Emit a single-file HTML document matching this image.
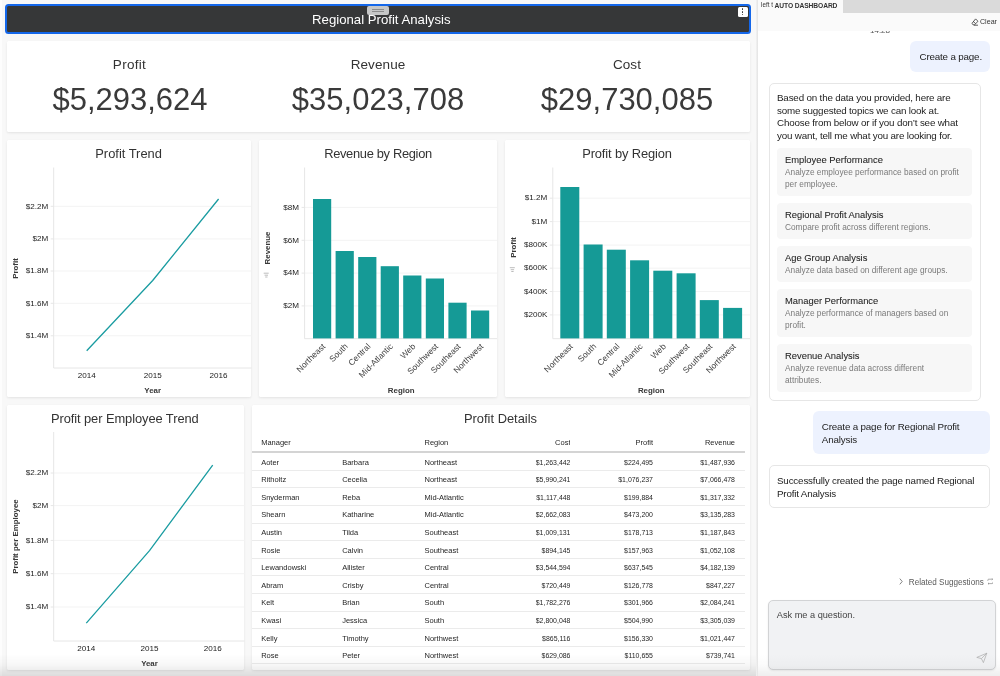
<!DOCTYPE html>
<html><head><meta charset="utf-8"><title>Regional Profit Analysis</title>
<style>
html,body{margin:0;padding:0;}
body{width:1000px;height:676px;overflow:hidden;background:#f8f8f8;font-family:"Liberation Sans",sans-serif;position:relative;color:#333;}
.abs{position:absolute;}
.panel{position:absolute;background:#fff;border-radius:1.5px;box-shadow:0 1px 2.5px rgba(0,0,0,.085),0 0 1.5px rgba(0,0,0,.035);}
.ttl{position:absolute;font-size:12.9px;color:#333;white-space:nowrap;transform:translate(-50%,-50%);}
.kl{position:absolute;font-size:13.5px;color:#333;white-space:nowrap;transform:translate(-50%,-50%);letter-spacing:.3px;}
.kv{position:absolute;font-size:31.7px;color:#3a3a3a;white-space:nowrap;transform:translate(-50%,-50%) scaleX(.978);}
svg text{font-family:"Liberation Sans",sans-serif;}
.tick{font-size:8.1px;fill:#1c1c1c;}
.axl{font-size:7.9px;fill:#383838;font-weight:bold;}
.rot{font-size:8.45px;fill:#444;}
table{border-collapse:collapse;position:absolute;font-size:7.5px;color:#262626;table-layout:fixed;}
td,th{padding:1px 0 0 0;height:15.6px;border-bottom:1px solid #ebebeb;font-weight:normal;text-align:left;white-space:nowrap;overflow:hidden;}
th{border-bottom:2px solid #d4d4d4;height:16.8px;}
.r{text-align:right;}
td.r{font-size:6.95px;}
.chat{font-size:9.8px;color:#222;line-height:12.5px;letter-spacing:-.17px;}
.ub{position:absolute;background:#edf2fe;border-radius:6px;}
.bb{position:absolute;background:#fff;border:1px solid #e6e6e6;border-radius:5px;box-sizing:border-box;}
.card{position:absolute;background:#f7f7f7;border-radius:4px;left:777px;width:195px;}
.ct{position:absolute;left:8px;font-size:9.4px;color:#1f1f1f;white-space:nowrap;-webkit-text-stroke:.07px #1f1f1f;}
.cd{position:absolute;left:8px;font-size:8.3px;color:#7a7a7a;line-height:12px;white-space:nowrap;}
</style></head><body><div id="root" style="position:absolute;left:0;top:0;width:1000px;height:676px;will-change:transform;">

<div class="abs" style="left:0;top:0;width:2.2px;height:676px;background:#fdfdfd;"></div>
<div class="abs" style="left:4.8px;top:3.5px;width:746.7px;height:30.9px;box-sizing:border-box;border:2.2px solid #1467ea;border-radius:3.5px;background:#363738;"></div>
<div class="abs" style="left:381.3px;top:18.7px;transform:translate(-50%,-50%);font-size:13.2px;color:#fff;white-space:nowrap;">Regional Profit Analysis</div>
<div class="abs" style="left:366.5px;top:6.4px;width:22px;height:9px;background:#cfcfcf;border-radius:2px;opacity:.95;"></div>
<div class="abs" style="left:371.5px;top:9px;width:12px;height:1px;background:#8c8c8c;"></div>
<div class="abs" style="left:371.5px;top:11.1px;width:12px;height:1px;background:#8c8c8c;"></div>
<div class="abs" style="left:737.5px;top:6.5px;width:10px;height:10.5px;background:#fff;border-radius:1.5px;"></div>
<div class="abs" style="left:741.9px;top:8.4px;width:1.5px;height:1.5px;background:#333;border-radius:50%;"></div>
<div class="abs" style="left:741.9px;top:11.0px;width:1.5px;height:1.5px;background:#333;border-radius:50%;"></div>
<div class="abs" style="left:741.9px;top:13.6px;width:1.5px;height:1.5px;background:#333;border-radius:50%;"></div>
<div class="panel" style="left:6.6px;top:40.8px;width:743.3px;height:91.5px;"></div>
<div class="kl" style="left:129.5px;top:63.8px;letter-spacing:0.3px;">Profit</div>
<div class="kv" style="left:129.5px;top:99.2px;">$5,293,624</div>
<div class="kl" style="left:378px;top:63.8px;letter-spacing:0.1px;">Revenue</div>
<div class="kv" style="left:378px;top:99.2px;">$35,023,708</div>
<div class="kl" style="left:627px;top:63.8px;letter-spacing:0.1px;">Cost</div>
<div class="kv" style="left:627px;top:99.2px;">$29,730,085</div>
<div class="panel" style="left:6.6px;top:140.3px;width:244.6px;height:256.6px;"></div>
<div class="panel" style="left:259.2px;top:140.3px;width:237.8px;height:256.6px;"></div>
<div class="panel" style="left:505.2px;top:140.3px;width:244.7px;height:256.6px;"></div>
<div class="panel" style="left:6.6px;top:404.8px;width:237.5px;height:265px;"></div>
<div class="panel" style="left:252.1px;top:404.8px;width:497.8px;height:265px;"></div>
<div class="ttl" style="left:128.6px;top:153.3px;">Profit Trend</div>
<div class="ttl" style="left:378px;top:153.3px;letter-spacing:-.33px;">Revenue by Region</div>
<div class="ttl" style="left:627px;top:153.3px;letter-spacing:-.13px;">Profit by Region</div>
<div class="ttl" style="left:124.8px;top:417.6px;letter-spacing:-.08px;">Profit per Employee Trend</div>
<div class="ttl" style="left:500.5px;top:417.6px;">Profit Details</div>
<svg class="abs" style="left:0;top:0;" width="758" height="676" viewBox="0 0 758 676">
<line x1="53.7" x2="251.5" y1="206.3" y2="206.3" stroke="#f3f3f3" stroke-width="1"/>
<line x1="50.7" x2="53.7" y1="206.3" y2="206.3" stroke="#e6e6e6" stroke-width="1"/>
<text class="tick" x="48.2" y="208.5" text-anchor="end">$2.2M</text>
<line x1="53.7" x2="251.5" y1="238.9" y2="238.9" stroke="#f3f3f3" stroke-width="1"/>
<line x1="50.7" x2="53.7" y1="238.9" y2="238.9" stroke="#e6e6e6" stroke-width="1"/>
<text class="tick" x="48.2" y="241.1" text-anchor="end">$2M</text>
<line x1="53.7" x2="251.5" y1="271" y2="271" stroke="#f3f3f3" stroke-width="1"/>
<line x1="50.7" x2="53.7" y1="271" y2="271" stroke="#e6e6e6" stroke-width="1"/>
<text class="tick" x="48.2" y="273.2" text-anchor="end">$1.8M</text>
<line x1="53.7" x2="251.5" y1="303.3" y2="303.3" stroke="#f3f3f3" stroke-width="1"/>
<line x1="50.7" x2="53.7" y1="303.3" y2="303.3" stroke="#e6e6e6" stroke-width="1"/>
<text class="tick" x="48.2" y="305.5" text-anchor="end">$1.6M</text>
<line x1="53.7" x2="251.5" y1="335.8" y2="335.8" stroke="#f3f3f3" stroke-width="1"/>
<line x1="50.7" x2="53.7" y1="335.8" y2="335.8" stroke="#e6e6e6" stroke-width="1"/>
<text class="tick" x="48.2" y="338.0" text-anchor="end">$1.4M</text>
<line x1="53.7" x2="53.7" y1="167.5" y2="368" stroke="#e6e6e6" stroke-width="1"/>
<line x1="53.7" x2="251.5" y1="368" y2="368" stroke="#e6e6e6" stroke-width="1"/>
<text class="tick" x="86.7" y="377.7" text-anchor="middle">2014</text>
<text class="tick" x="152.7" y="377.7" text-anchor="middle">2015</text>
<text class="tick" x="218.6" y="377.7" text-anchor="middle">2016</text>
<text class="axl" x="152.7" y="393.4" text-anchor="middle">Year</text>
<text class="axl" transform="translate(17.5,268.5) rotate(-90)" text-anchor="middle">Profit</text>
<polyline points="86.7,350.7 152.7,280.5 218.6,199" fill="none" stroke="#1a9ca1" stroke-width="1.3" stroke-linejoin="round"/>
<line x1="53.7" x2="244.5" y1="473" y2="473" stroke="#f3f3f3" stroke-width="1"/>
<line x1="50.7" x2="53.7" y1="473" y2="473" stroke="#e6e6e6" stroke-width="1"/>
<text class="tick" x="48.2" y="475.2" text-anchor="end">$2.2M</text>
<line x1="53.7" x2="244.5" y1="505.6" y2="505.6" stroke="#f3f3f3" stroke-width="1"/>
<line x1="50.7" x2="53.7" y1="505.6" y2="505.6" stroke="#e6e6e6" stroke-width="1"/>
<text class="tick" x="48.2" y="507.8" text-anchor="end">$2M</text>
<line x1="53.7" x2="244.5" y1="540.4" y2="540.4" stroke="#f3f3f3" stroke-width="1"/>
<line x1="50.7" x2="53.7" y1="540.4" y2="540.4" stroke="#e6e6e6" stroke-width="1"/>
<text class="tick" x="48.2" y="542.6" text-anchor="end">$1.8M</text>
<line x1="53.7" x2="244.5" y1="573.7" y2="573.7" stroke="#f3f3f3" stroke-width="1"/>
<line x1="50.7" x2="53.7" y1="573.7" y2="573.7" stroke="#e6e6e6" stroke-width="1"/>
<text class="tick" x="48.2" y="575.9000000000001" text-anchor="end">$1.6M</text>
<line x1="53.7" x2="244.5" y1="607" y2="607" stroke="#f3f3f3" stroke-width="1"/>
<line x1="50.7" x2="53.7" y1="607" y2="607" stroke="#e6e6e6" stroke-width="1"/>
<text class="tick" x="48.2" y="609.2" text-anchor="end">$1.4M</text>
<line x1="53.7" x2="53.7" y1="432" y2="641" stroke="#e6e6e6" stroke-width="1"/>
<line x1="53.7" x2="244.5" y1="641" y2="641" stroke="#e6e6e6" stroke-width="1"/>
<text class="tick" x="86.3" y="650.6999999999999" text-anchor="middle">2014</text>
<text class="tick" x="149.5" y="650.6999999999999" text-anchor="middle">2015</text>
<text class="tick" x="212.7" y="650.6999999999999" text-anchor="middle">2016</text>
<text class="axl" x="149.5" y="666.4" text-anchor="middle">Year</text>
<text class="axl" transform="translate(17.5,536.6) rotate(-90)" text-anchor="middle">Profit per Employee</text>
<polyline points="86.3,623.1 149.5,550.6 212.7,465.1" fill="none" stroke="#1a9ca1" stroke-width="1.3" stroke-linejoin="round"/>
<line x1="304.6" x2="497" y1="207.4" y2="207.4" stroke="#f3f3f3" stroke-width="1"/>
<line x1="301.6" x2="304.6" y1="207.4" y2="207.4" stroke="#e6e6e6" stroke-width="1"/>
<text class="tick" x="299.1" y="209.6" text-anchor="end">$8M</text>
<line x1="304.6" x2="497" y1="240.3" y2="240.3" stroke="#f3f3f3" stroke-width="1"/>
<line x1="301.6" x2="304.6" y1="240.3" y2="240.3" stroke="#e6e6e6" stroke-width="1"/>
<text class="tick" x="299.1" y="242.5" text-anchor="end">$6M</text>
<line x1="304.6" x2="497" y1="273.1" y2="273.1" stroke="#f3f3f3" stroke-width="1"/>
<line x1="301.6" x2="304.6" y1="273.1" y2="273.1" stroke="#e6e6e6" stroke-width="1"/>
<text class="tick" x="299.1" y="275.3" text-anchor="end">$4M</text>
<line x1="304.6" x2="497" y1="305.9" y2="305.9" stroke="#f3f3f3" stroke-width="1"/>
<line x1="301.6" x2="304.6" y1="305.9" y2="305.9" stroke="#e6e6e6" stroke-width="1"/>
<text class="tick" x="299.1" y="308.09999999999997" text-anchor="end">$2M</text>
<line x1="304.6" x2="304.6" y1="167.5" y2="338.7" stroke="#e6e6e6" stroke-width="1"/>
<line x1="304.6" x2="497" y1="338.7" y2="338.7" stroke="#e6e6e6" stroke-width="1"/>
<rect x="313" y="199" width="18.2" height="139.40" fill="#159a96"/>
<text class="rot" transform="translate(325.8,347.0) rotate(-45)" text-anchor="end">Northeast</text>
<rect x="335.6" y="251" width="18.2" height="87.40" fill="#159a96"/>
<text class="rot" transform="translate(348.40000000000003,347.0) rotate(-45)" text-anchor="end">South</text>
<rect x="358.2" y="257" width="18.2" height="81.40" fill="#159a96"/>
<text class="rot" transform="translate(371.0,347.0) rotate(-45)" text-anchor="end">Central</text>
<rect x="380.7" y="266.2" width="18.2" height="72.20" fill="#159a96"/>
<text class="rot" transform="translate(393.5,347.0) rotate(-45)" text-anchor="end">Mid-Atlantic</text>
<rect x="403.2" y="275.5" width="18.2" height="62.90" fill="#159a96"/>
<text class="rot" transform="translate(416.0,347.0) rotate(-45)" text-anchor="end">Web</text>
<rect x="425.8" y="278.5" width="18.2" height="59.90" fill="#159a96"/>
<text class="rot" transform="translate(438.6,347.0) rotate(-45)" text-anchor="end">Southwest</text>
<rect x="448.4" y="302.7" width="18.2" height="35.70" fill="#159a96"/>
<text class="rot" transform="translate(461.2,347.0) rotate(-45)" text-anchor="end">Southeast</text>
<rect x="471" y="310.5" width="18.2" height="27.90" fill="#159a96"/>
<text class="rot" transform="translate(483.8,347.0) rotate(-45)" text-anchor="end">Northwest</text>
<text class="axl" x="401.2" y="393.2" text-anchor="middle">Region</text>
<text class="axl" transform="translate(270.2,248) rotate(-90)" text-anchor="middle">Revenue</text>
<g stroke="#ababab" stroke-width="0.8"><line x1="263.7" x2="268.7" y1="273.2" y2="273.2"/><line x1="264.59999999999997" x2="268.0" y1="275.2" y2="275.2"/><line x1="265.2" x2="267.5" y1="277" y2="277"/></g>
<line x1="552.8" x2="750" y1="198.2" y2="198.2" stroke="#f3f3f3" stroke-width="1"/>
<line x1="549.8" x2="552.8" y1="198.2" y2="198.2" stroke="#e6e6e6" stroke-width="1"/>
<text class="tick" x="547.3" y="200.39999999999998" text-anchor="end">$1.2M</text>
<line x1="552.8" x2="750" y1="221.6" y2="221.6" stroke="#f3f3f3" stroke-width="1"/>
<line x1="549.8" x2="552.8" y1="221.6" y2="221.6" stroke="#e6e6e6" stroke-width="1"/>
<text class="tick" x="547.3" y="223.79999999999998" text-anchor="end">$1M</text>
<line x1="552.8" x2="750" y1="245.1" y2="245.1" stroke="#f3f3f3" stroke-width="1"/>
<line x1="549.8" x2="552.8" y1="245.1" y2="245.1" stroke="#e6e6e6" stroke-width="1"/>
<text class="tick" x="547.3" y="247.29999999999998" text-anchor="end">$800K</text>
<line x1="552.8" x2="750" y1="268.2" y2="268.2" stroke="#f3f3f3" stroke-width="1"/>
<line x1="549.8" x2="552.8" y1="268.2" y2="268.2" stroke="#e6e6e6" stroke-width="1"/>
<text class="tick" x="547.3" y="270.4" text-anchor="end">$600K</text>
<line x1="552.8" x2="750" y1="291.5" y2="291.5" stroke="#f3f3f3" stroke-width="1"/>
<line x1="549.8" x2="552.8" y1="291.5" y2="291.5" stroke="#e6e6e6" stroke-width="1"/>
<text class="tick" x="547.3" y="293.7" text-anchor="end">$400K</text>
<line x1="552.8" x2="750" y1="314.9" y2="314.9" stroke="#f3f3f3" stroke-width="1"/>
<line x1="549.8" x2="552.8" y1="314.9" y2="314.9" stroke="#e6e6e6" stroke-width="1"/>
<text class="tick" x="547.3" y="317.09999999999997" text-anchor="end">$200K</text>
<line x1="552.8" x2="552.8" y1="167.5" y2="338.7" stroke="#e6e6e6" stroke-width="1"/>
<line x1="552.8" x2="750" y1="338.7" y2="338.7" stroke="#e6e6e6" stroke-width="1"/>
<rect x="560.3" y="187" width="19" height="151.40" fill="#159a96"/>
<text class="rot" transform="translate(573.5,347.0) rotate(-45)" text-anchor="end">Northeast</text>
<rect x="583.6" y="244.5" width="19" height="93.90" fill="#159a96"/>
<text class="rot" transform="translate(596.8000000000001,347.0) rotate(-45)" text-anchor="end">South</text>
<rect x="606.8" y="249.7" width="19" height="88.70" fill="#159a96"/>
<text class="rot" transform="translate(620.0,347.0) rotate(-45)" text-anchor="end">Central</text>
<rect x="630.1" y="260.3" width="19" height="78.10" fill="#159a96"/>
<text class="rot" transform="translate(643.3000000000001,347.0) rotate(-45)" text-anchor="end">Mid-Atlantic</text>
<rect x="653.3" y="270.7" width="19" height="67.70" fill="#159a96"/>
<text class="rot" transform="translate(666.5,347.0) rotate(-45)" text-anchor="end">Web</text>
<rect x="676.6" y="273.3" width="19" height="65.10" fill="#159a96"/>
<text class="rot" transform="translate(689.8000000000001,347.0) rotate(-45)" text-anchor="end">Southwest</text>
<rect x="699.8" y="300.1" width="19" height="38.30" fill="#159a96"/>
<text class="rot" transform="translate(713.0,347.0) rotate(-45)" text-anchor="end">Southeast</text>
<rect x="723.1" y="307.9" width="19" height="30.50" fill="#159a96"/>
<text class="rot" transform="translate(736.3000000000001,347.0) rotate(-45)" text-anchor="end">Northwest</text>
<text class="axl" x="651.3" y="393.3" text-anchor="middle">Region</text>
<text class="axl" transform="translate(515.8,247.5) rotate(-90)" text-anchor="middle">Profit</text>
<g stroke="#ababab" stroke-width="0.8"><line x1="509.79999999999995" x2="514.8" y1="267.7" y2="267.7"/><line x1="510.69999999999993" x2="514.0999999999999" y1="269.7" y2="269.7"/><line x1="511.29999999999995" x2="513.5999999999999" y1="271.5" y2="271.5"/></g>
</svg>
<table style="left:252px;top:433.5px;width:493px;">
<colgroup><col style="width:9.2px"><col style="width:81px"><col style="width:82.3px"><col style="width:64px"><col style="width:82px"><col style="width:82.5px"><col style="width:82px"><col style="width:10px"></colgroup>
<tr><th></th><th>Manager</th><th></th><th>Region</th><th class="r">Cost</th><th class="r">Profit</th><th class="r">Revenue</th><th></th></tr>
<tr><td></td><td>Aoter</td><td>Barbara</td><td>Northeast</td><td class="r">$1,263,442</td><td class="r">$224,495</td><td class="r">$1,487,936</td><td></td></tr>
<tr><td></td><td>Ritholtz</td><td>Cecelia</td><td>Northeast</td><td class="r">$5,990,241</td><td class="r">$1,076,237</td><td class="r">$7,066,478</td><td></td></tr>
<tr><td></td><td>Snyderman</td><td>Reba</td><td>Mid-Atlantic</td><td class="r">$1,117,448</td><td class="r">$199,884</td><td class="r">$1,317,332</td><td></td></tr>
<tr><td></td><td>Shearn</td><td>Katharine</td><td>Mid-Atlantic</td><td class="r">$2,662,083</td><td class="r">$473,200</td><td class="r">$3,135,283</td><td></td></tr>
<tr><td></td><td>Austin</td><td>Tilda</td><td>Southeast</td><td class="r">$1,009,131</td><td class="r">$178,713</td><td class="r">$1,187,843</td><td></td></tr>
<tr><td></td><td>Rosie</td><td>Calvin</td><td>Southeast</td><td class="r">$894,145</td><td class="r">$157,963</td><td class="r">$1,052,108</td><td></td></tr>
<tr><td></td><td>Lewandowski</td><td>Allister</td><td>Central</td><td class="r">$3,544,594</td><td class="r">$637,545</td><td class="r">$4,182,139</td><td></td></tr>
<tr><td></td><td>Abram</td><td>Crisby</td><td>Central</td><td class="r">$720,449</td><td class="r">$126,778</td><td class="r">$847,227</td><td></td></tr>
<tr><td></td><td>Kelt</td><td>Brian</td><td>South</td><td class="r">$1,782,276</td><td class="r">$301,966</td><td class="r">$2,084,241</td><td></td></tr>
<tr><td></td><td>Kwasi</td><td>Jessica</td><td>South</td><td class="r">$2,800,048</td><td class="r">$504,990</td><td class="r">$3,305,039</td><td></td></tr>
<tr><td></td><td>Kelly</td><td>Timothy</td><td>Northwest</td><td class="r">$865,116</td><td class="r">$156,330</td><td class="r">$1,021,447</td><td></td></tr>
<tr><td></td><td>Rose</td><td>Peter</td><td>Northwest</td><td class="r">$629,086</td><td class="r">$110,655</td><td class="r">$739,741</td><td></td></tr>
</table>
<div class="abs" style="left:0;top:654px;width:758px;height:22px;background:linear-gradient(to bottom,rgba(0,0,0,0) 0%,rgba(0,0,0,.03) 50%,rgba(0,0,0,.11) 100%);"></div>
<div class="abs" style="left:756px;top:0;width:2px;height:676px;background:linear-gradient(to right,#f3f3f3,#e2e2e2);"></div>
<div class="abs" style="left:758px;top:0;width:242px;height:676px;background:#fff;"></div>
<div class="abs" style="left:758px;top:0;width:242px;height:30.5px;background:#fafafa;"></div>
<div class="abs" style="left:843.3px;top:0;width:157px;height:12.6px;background:#dadada;"></div>
<div class="abs" style="left:761px;top:0.7px;font-size:6.3px;color:#333;white-space:nowrap;">left t</div>
<div class="abs" style="left:774.6px;top:2.2px;font-size:6.7px;font-weight:bold;color:#333;white-space:nowrap;letter-spacing:-.1px;">AUTO DASHBOARD</div>
<svg class="abs" style="left:971.3px;top:17.6px;" width="8" height="8" viewBox="0 0 8 8"><path d="M4.6 0.9 L7 3.3 L3.6 6.7 L2.1 6.7 L0.9 5.5 Z M2.2 3.3 L4.6 5.7 M2.8 7.2 H7" fill="none" stroke="#333" stroke-width="0.8" stroke-linejoin="round"/></svg>
<div class="abs" style="left:980px;top:17.8px;font-size:7.1px;color:#333;white-space:nowrap;">Clear</div>
<div class="abs" style="left:860px;top:30.5px;width:40px;height:3.2px;overflow:hidden;"><div style="position:absolute;left:0;width:40px;text-align:center;top:-4.2px;font-size:8px;color:#555;">14:28</div></div>
<div class="ub" style="left:910px;top:41.2px;width:80px;height:31px;"></div>
<div class="abs chat" style="left:919.5px;top:51px;white-space:nowrap;">Create a page.</div>
<div class="bb" style="left:768.5px;top:82.5px;width:212px;height:318.2px;"></div>
<div class="abs chat" style="left:777px;top:92.4px;white-space:nowrap;">Based on the data you provided, here are<br>some suggested topics we can look at.<br>Choose from below or if you don’t see what<br>you want, tell me what you are looking for.</div>
<div class="card" style="top:147.5px;height:48px;"><div class="ct" style="top:6.8px;">Employee Performance</div><div class="cd" style="top:18.7px;">Analyze employee performance based on profit<br>per employee.</div></div>
<div class="card" style="top:202.5px;height:36px;"><div class="ct" style="top:6.8px;">Regional Profit Analysis</div><div class="cd" style="top:18.7px;">Compare profit across different regions.</div></div>
<div class="card" style="top:245.5px;height:36px;"><div class="ct" style="top:6.8px;">Age Group Analysis</div><div class="cd" style="top:18.7px;">Analyze data based on different age groups.</div></div>
<div class="card" style="top:288.5px;height:48px;"><div class="ct" style="top:6.8px;">Manager Performance</div><div class="cd" style="top:18.7px;">Analyze performance of managers based on<br>profit.</div></div>
<div class="card" style="top:343.5px;height:48px;"><div class="ct" style="top:6.8px;">Revenue Analysis</div><div class="cd" style="top:18.7px;">Analyze revenue data across different<br>attributes.</div></div>
<div class="ub" style="left:812.5px;top:411.3px;width:177.5px;height:43.2px;"></div>
<div class="abs chat" style="left:821.8px;top:421.4px;white-space:nowrap;">Create a page for Regional Profit<br>Analysis</div>
<div class="bb" style="left:768.5px;top:465px;width:221.5px;height:42.5px;"></div>
<div class="abs chat" style="left:777px;top:475px;white-space:nowrap;">Successfully created the page named Regional<br>Profit Analysis</div>
<svg class="abs" style="left:898px;top:577.4px;" width="6" height="9" viewBox="0 0 6 9"><path d="M1.8 1.6 L4.2 4.5 L1.8 7.4" fill="none" stroke="#666" stroke-width="0.8"/></svg>
<div class="abs" style="left:908.8px;top:577.5px;font-size:8.15px;color:#5a5a5a;white-space:nowrap;">Related Suggestions</div>
<svg class="abs" style="left:986.6px;top:577.8px;" width="6.8" height="6.8" viewBox="0 0 8 8"><path d="M1 3.4 V2.4 Q1 1.4 2 1.4 H6.6 M5.6 0.4 L6.7 1.4 L5.6 2.4 M7 4.6 V5.6 Q7 6.6 6 6.6 H1.4 M2.4 5.6 L1.3 6.6 L2.4 7.6" fill="none" stroke="#777" stroke-width="0.7"/></svg>
<div class="abs" style="left:768px;top:600.2px;width:227.5px;height:69.8px;box-sizing:border-box;background:#f1f2f4;border:1px solid #d2d3d5;border-radius:5px;box-shadow:0 1px 2px rgba(0,0,0,.08);"></div>
<div class="abs" style="left:776.8px;top:610.1px;font-size:9.2px;color:#444;white-space:nowrap;">Ask me a question.</div>
<svg class="abs" style="left:975.5px;top:652px;" width="12" height="12" viewBox="0 0 12 12"><path d="M0.8 5.4 L10.8 1.2 L7.4 10.6 L5.4 6.6 Z M5.4 6.6 L10.8 1.2" fill="none" stroke="#aaa" stroke-width="0.7" stroke-linejoin="round"/></svg>
<div class="abs" style="left:758px;top:654px;width:242px;height:22px;background:linear-gradient(to bottom,rgba(0,0,0,0) 0%,rgba(0,0,0,.015) 50%,rgba(0,0,0,.065) 100%);"></div>
</div></body></html>
